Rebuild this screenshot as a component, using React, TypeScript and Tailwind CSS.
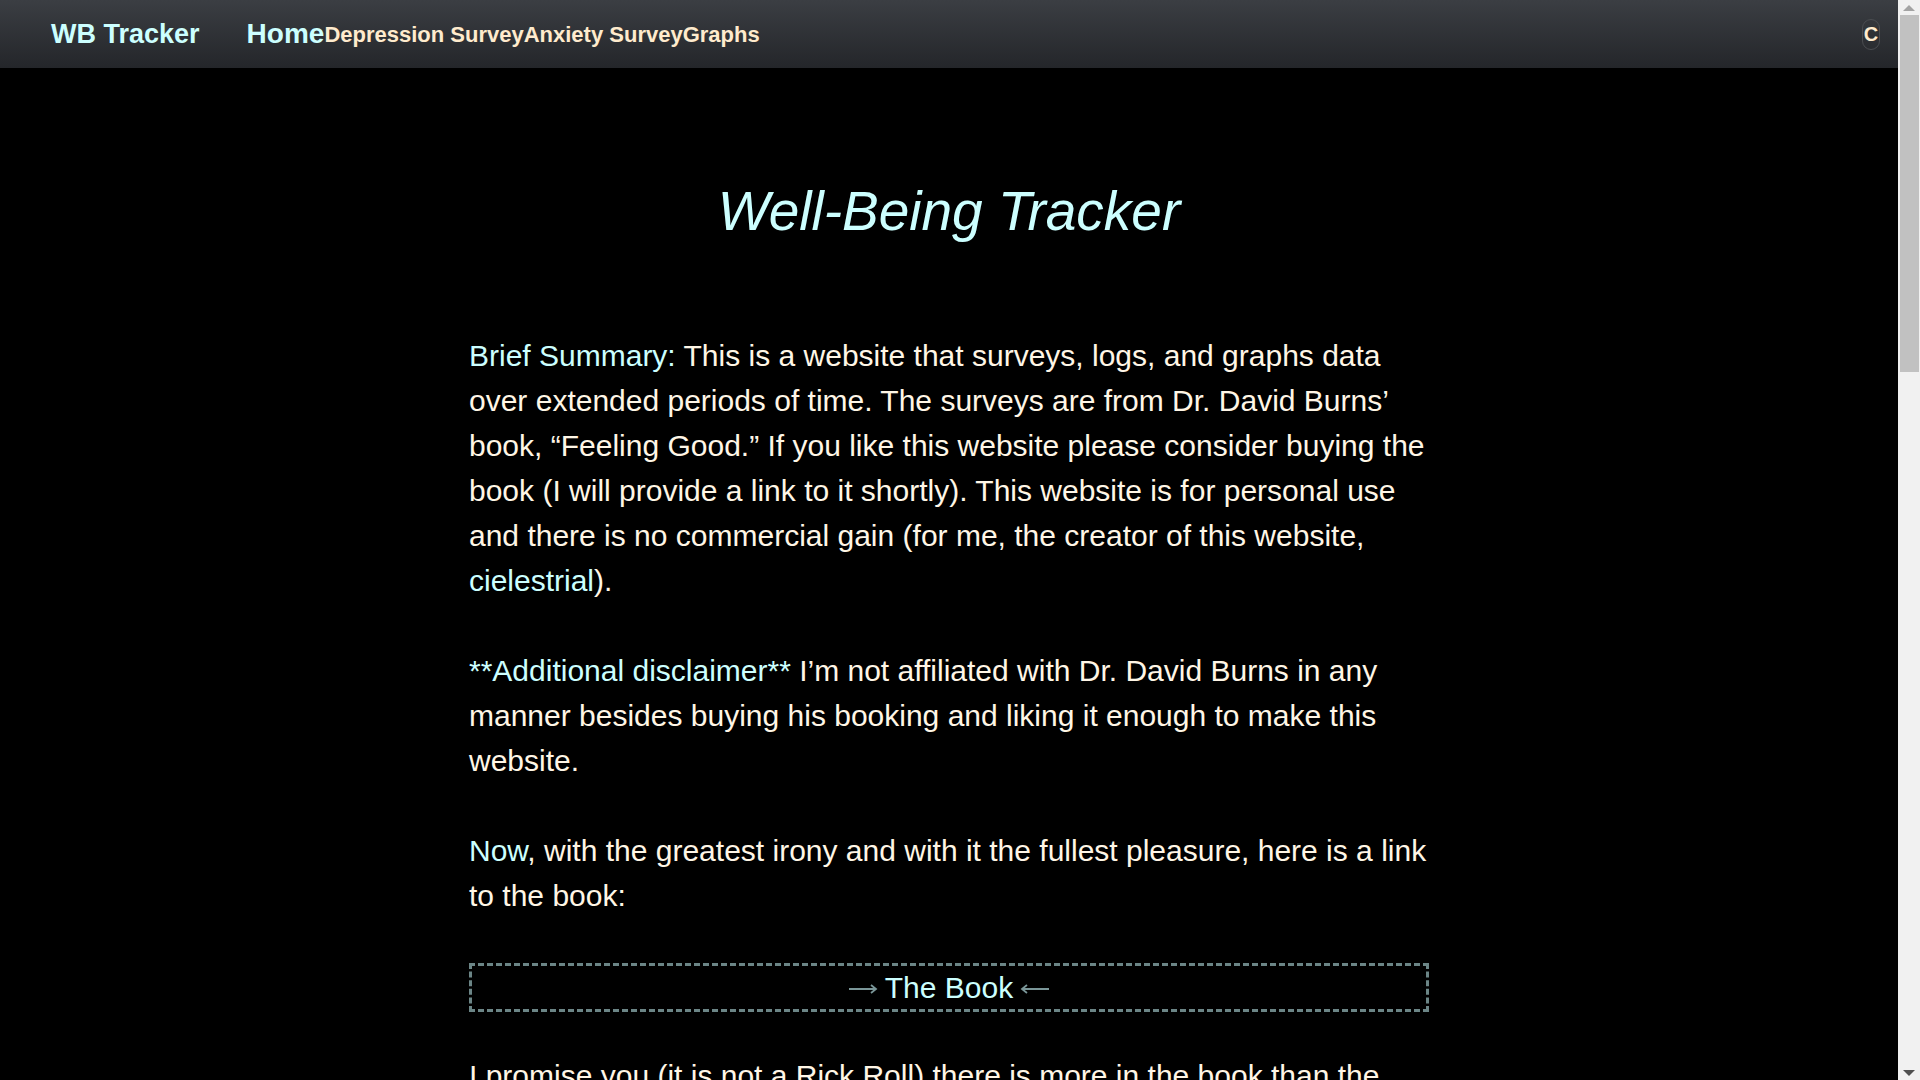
import React from 'react';

const Arrow: React.FC<{ flip?: boolean }> = ({ flip }) => (
    <svg width="30" height="12" viewBox="0 0 30 12" className={flip ? 'rotate-180 mt-[3px]' : 'mt-[3px]'}>
        <path d="M1 6 H28 M23 2 L28 6 L23 10" fill="none" stroke="#7a9698" strokeWidth="1.8" />
    </svg>
);

const NavBar: React.FC = () => {
    return (
        <nav className="h-[68px] w-full flex items-center bg-gradient-to-b from-[#3b3e43] to-[#24262a] pl-[51px] pr-[18px]">
            <span className="text-[27px] font-bold text-[#ccffff] mr-[47px]">WB Tracker</span>
            <div className="flex items-center">
                <a className="text-[28px] font-bold text-[#ccffff]">Home</a>
                <a className="text-[22px] font-bold text-[#ffebcd]">Depression Survey</a>
                <a className="text-[22px] font-bold text-[#ffebcd]">Anxiety Survey</a>
                <a className="text-[22px] font-bold text-[#ffebcd]">Graphs</a>
            </div>
            <div className="ml-auto">
                <button className="h-[31px] w-[18px] flex items-center justify-center rounded-full border border-[#4a4c50] text-[20px] font-bold text-[#ffebcd]">
                    C
                </button>
            </div>
        </nav>
    );
};

// fake browser scrollbar, the reference was taken with one showing
const ScrollBar: React.FC = () => (
    <div className="w-[22px] h-full bg-[#f1f1f1] flex flex-col items-center">
        <div className="h-[15px] flex items-center justify-center">
            <div className="w-0 h-0 border-l-[6px] border-r-[6px] border-b-[6px] border-l-transparent border-r-transparent border-b-[#a3a3a3]" />
        </div>
        <div className="w-[19px] ml-[1px] h-[357px] bg-[#c1c1c1]" />
        <div className="flex-1" />
        <div className="h-[15px] flex items-center justify-center">
            <div className="w-0 h-0 border-l-[6px] border-r-[6px] border-t-[6px] border-l-transparent border-r-transparent border-t-[#505050]" />
        </div>
    </div>
);

const App: React.FC = () => {
    return (
        <div className="h-screen flex bg-black overflow-hidden" style={{ fontFamily: '"Liberation Sans", Arial, sans-serif' }}>
            <div className="flex-1 h-full overflow-hidden">
                <NavBar />
                <main className="w-[960px] mx-auto pt-[112px] pb-[120px]">
                    <h1 className="text-center italic text-[55px] leading-[63px] text-[#ccffff] mb-[90px]">
                        Well-Being Tracker
                    </h1>
                    <div className="text-[30px] leading-[45px] text-[#fff6e6]">
                        <p className="mb-[45px]">
                            <span className="text-[#ccffff]">Brief Summary:</span> This is a website that surveys, logs, and graphs
                            data over extended periods of time. The surveys are from Dr. David Burns’ book, “Feeling Good.” If you
                            like this website please consider buying the book (I will provide a link to it shortly). This website
                            is for personal use and there is no commercial gain (for me, the creator of this website,{' '}
                            <span className="text-[#ccffff]">cielestrial</span>).
                        </p>
                        <p className="mb-[45px]">
                            <span className="text-[#ccffff]">**Additional disclaimer**</span> I’m not affiliated with Dr. David Burns
                            in any manner besides buying his booking and liking it enough to make this website.
                        </p>
                        <p className="mb-[45px]">
                            <span className="text-[#ccffff]">Now</span>, with the greatest irony and with it the fullest pleasure,
                            here is a link to the book:
                        </p>
                        <a className="h-[49px] flex items-center justify-center gap-[7px] border-[3px] border-dashed border-[#6b8586] mb-[41px]">
                            <Arrow />
                            <span className="text-[#ccffff]">The Book</span>
                            <Arrow flip />
                        </a>
                        <p className="mb-[45px]">
                            I promise you (it is not a Rick Roll) there is more in the book than the surveys on this website. The
                            book goes over many ways to understand and improve your mood, and it is well worth the read.
                        </p>
                        <p>
                            To get started, take the Depression Survey or the Anxiety Survey from the navigation bar above, then
                            come back over time and check your progress on the Graphs page.
                        </p>
                    </div>
                </main>
            </div>
            <ScrollBar />
        </div>
    );
};

export default App;
